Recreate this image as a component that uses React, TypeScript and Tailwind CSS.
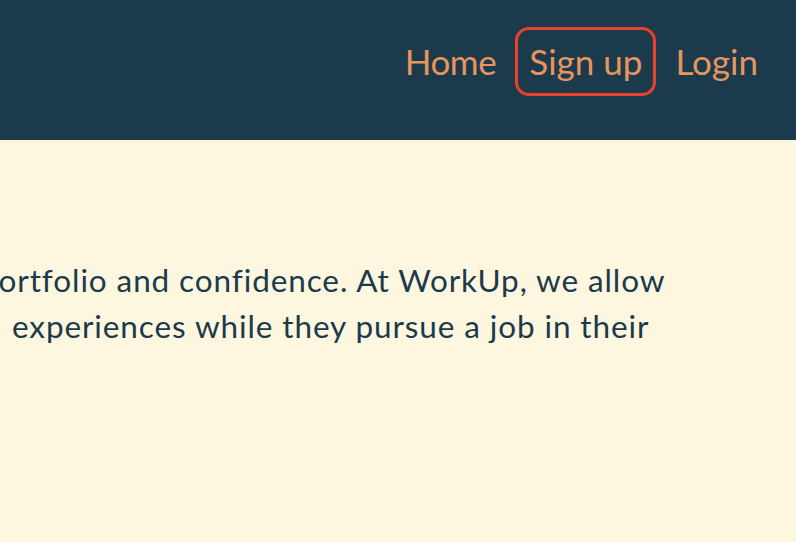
export default function App() {
  const font = { fontFamily: "Lato, 'Noto Sans', sans-serif" };
  return (
    <div className="min-h-screen w-full overflow-hidden bg-[#fef7e0]" style={font}>
      <header className="h-[140px] bg-[#1b3a4b] flex justify-end items-start pt-[27px] pr-[24px] gap-[5px]">
        <a className="h-[69px] flex items-center px-[11px] border-[3px] border-transparent rounded-[14px] text-[35px] tracking-[-0.4px] text-[#e6955f]">Home</a>
        <a className="h-[69px] flex items-center px-[11px] border-[3px] border-[#e8432a] rounded-[14px] text-[35px] text-[#e6955f]">Sign up</a>
        <a className="h-[69px] flex items-center px-[11px] border-[3px] border-transparent rounded-[14px] text-[35px] text-[#e6955f]">Login</a>
      </header>
      <main className="pt-[117px] text-[#1b3a4b] text-[31.5px] leading-[46px] tracking-[0.9px]">
        <div className="whitespace-nowrap ml-[-20px]">portfolio and confidence. At WorkUp, we allow</div>
        <div className="whitespace-nowrap ml-[12px]">experiences while they pursue a job in their</div>
      </main>
    </div>
  );
}
